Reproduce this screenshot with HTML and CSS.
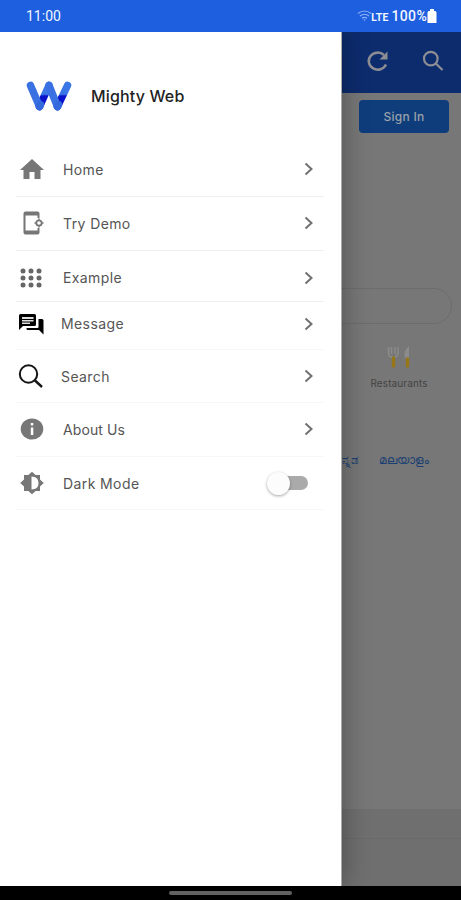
FILE: index.html
```
<!DOCTYPE html>
<html lang="en">
<head>
<meta charset="utf-8">
<title>Mighty Web</title>
<link rel="stylesheet" href="styles.css">
</head>
<body>
<div class="phone">
  <header class="status">
    <span class="time">11:00</span>
    <div class="signals">
      <svg class="wifi" width="15" height="12" viewBox="0 0 15 12" fill="none" stroke="#8fb0f5" stroke-width="1.2"><path d="M1 3.5Q7.500-1.500 14 3.500M3 6Q7.500 2.500 12 6M5 8.300Q7.500 6.500 10 8.300"/><path d="M6.300 9.500h2.400L7.500 11z" fill="#8fb0f5" stroke="none"/></svg>
      <span class="lte">LTE</span>
      <span class="percent">100%</span>
      <svg class="battery" width="10" height="14" viewBox="0 0 10 14" fill="#fff"><path d="M3 0h4v2h1.500l1 1.300V14H.5V3.300L1.500 2H3z"/></svg>
    </div>
  </header>

  <div class="screen">
    <main class="page">
      <div class="toolbar">
        <svg width="24" height="24" viewBox="0 0 24 24" fill="none" stroke="#8d8e94" stroke-width="2.500"><path d="M21 15.500A9 8.500 0 1 1 19 6"/><path d="M22.500 2.500v8h-8z" fill="#8d8e94" stroke="none"/></svg>
        <svg width="22" height="22" viewBox="0 0 22 22" fill="none" stroke="#8d8e94" stroke-width="2.200"><circle cx="8.800" cy="8.600" r="6.800"/><path d="M13.800 13.500 20.500 20"/></svg>
      </div>
      <button class="signin">Sign In</button>
      <div class="searchbox"></div>
      <div class="category">
        <svg width="24" height="24" viewBox="0 0 24 24" fill="none"><path d="M1.500 2v6q0 4 4.500 4.500Q11 12 11 8V2M4.500 2v7M8 2v7" stroke="#8b8b8b" stroke-width="1.500"/><path d="M22 1v12h-4q-2-7 4-12z" fill="#8b8b8b"/><path d="M6.500 13v8M20.500 14v7" stroke="#967617" stroke-width="3.400" stroke-linecap="round"/></svg>
        <span>Restaurants</span>
      </div>
      <div class="languages"><span>ಕನ್ನಡ</span><span>മലയാളം</span></div>
      <footer class="footer"><div class="footer-top"></div></footer>
    </main>

    <aside class="drawer">
      <div class="brand">
        <svg width="46" height="30" viewBox="0 0 46 30" fill="none" stroke-linecap="round" stroke-width="7.500">
          <defs>
            <linearGradient id="fold" gradientUnits="userSpaceOnUse" x1="0" y1="4" x2="0" y2="26"><stop offset=".42" stop-color="#3a76e6"/><stop offset=".5" stop-color="#0b12cc"/></linearGradient>
          </defs>
          <path d="M13.500 25.500 23 4.500M31.500 25.500 41.500 4.500" stroke="url(#fold)"/>
          <path d="M4.500 4.500 13.500 25.500M23 4.500 31.500 25.500" stroke="#3971e2"/>
          <path d="M13.500 25.500 14.500 23.500M31.500 25.500 32.500 23.500" stroke="#3468dd"/>
        </svg>
        <span>Mighty Web</span>
      </div>
      <nav class="menu">
        <a class="item home">
          <svg class="icon" width="26" height="24" viewBox="0 0 26 24" fill="#777"><path d="M13 2 1 13h3.500v9h6v-7h5v7h6v-9H25z"/></svg>
          <span>Home</span>
          <svg class="chevron" width="10" height="14" viewBox="0 0 10 14"><path d="m1.500 1.500 6 5.500-6 5.500"/></svg>
        </a>
        <a class="item demo">
          <svg class="icon" width="26" height="24" viewBox="0 0 26 24" fill="none" stroke="#777"><path d="M19.500 7V2.500q0-1-1-1h-12q-1 0-1 1v19q0 1 1 1h12q1 0 1-1V17" stroke-width="2"/><path d="M5 3h15M5 21h15" stroke-width="3"/><circle cx="20" cy="12" r="2.700" stroke-width="1.800"/><path d="M20 7.500v2M20 14.500v2M15.500 12h2M22.500 12h2" stroke-width="1.500"/></svg>
          <span>Try Demo</span>
          <svg class="chevron" width="10" height="14" viewBox="0 0 10 14"><path d="m1.500 1.500 6 5.500-6 5.500"/></svg>
        </a>
        <a class="item example">
          <svg class="icon" width="26" height="24" viewBox="0 0 26 24" fill="#666"><circle cx="4" cy="5" r="2.500"/><circle cx="12" cy="5" r="2.500"/><circle cx="20" cy="5" r="2.500"/><circle cx="4" cy="12" r="2.500"/><circle cx="12" cy="12" r="2.500"/><circle cx="20" cy="12" r="2.500"/><circle cx="4" cy="19" r="2.500"/><circle cx="12" cy="19" r="2.500"/><circle cx="20" cy="19" r="2.500"/></svg>
          <span>Example</span>
          <svg class="chevron" width="10" height="14" viewBox="0 0 10 14"><path d="m1.500 1.500 6 5.500-6 5.500"/></svg>
        </a>
        <a class="item message">
          <svg class="icon" width="26" height="24" viewBox="0 0 26 24" fill="#000"><path d="M2.500 2h14q1.500 0 1.500 1.500v9q0 1.500-1.500 1.500H5l-4 4V3.500Q1 2 2.500 2z"/><path d="M20.500 7H24q1.500 0 1.500 1.500v14L21 18H9.500q-1 0-1-1.500V16h11q1 0 1-1z"/><path d="M4 5h11.500v2H4zM4 8h11.500v1.500H4zM4 10.500h8V12H4z" fill="#ddd"/></svg>
          <span>Message</span>
          <svg class="chevron" width="10" height="14" viewBox="0 0 10 14"><path d="m1.500 1.500 6 5.500-6 5.500"/></svg>
        </a>
        <a class="item search">
          <svg class="icon" width="26" height="24" viewBox="0 0 26 24" fill="none" stroke="#151515" stroke-width="2"><circle cx="10.500" cy="10" r="8.700"/><path d="m16.500 16 7.500 7" stroke-width="2.400"/></svg>
          <span>Search</span>
          <svg class="chevron" width="10" height="14" viewBox="0 0 10 14"><path d="m1.500 1.500 6 5.500-6 5.500"/></svg>
        </a>
        <a class="item about">
          <svg class="icon" width="26" height="24" viewBox="0 0 26 24"><ellipse cx="13" cy="12" rx="11.300" ry="10.500" fill="#777"/><path d="M11.800 6h2.500v2.500h-2.500zM11.800 10.500h2.500V18h-2.500z" fill="#fff"/></svg>
          <span>About Us</span>
          <svg class="chevron" width="10" height="14" viewBox="0 0 10 14"><path d="m1.500 1.500 6 5.500-6 5.500"/></svg>
        </a>
        <div class="item dark">
          <svg class="icon" width="26" height="24" viewBox="0 0 26 24"><path d="m13 .8 3.600 3.200H21v4.600l3.800 3.400L21 15.400V20h-4.400L13 23.200 9.400 20H5v-4.600L1.200 12 5 8.600V4h4.400z" fill="#777"/><path d="M12.500 5.500q7 0 7 6.500t-7 6.500z" fill="#fff"/></svg>
          <span>Dark Mode</span>
          <div class="switch"><div class="thumb"></div></div>
        </div>
      </nav>
    </aside>
  </div>

  <div class="navbar"><div class="handle"></div></div>
</div>
</body>
</html>
```
FILE: styles.css
```
* { box-sizing: border-box; }
body { margin: 0; font-family: Inter, "Noto Sans", sans-serif; }
.phone { display: flex; flex-direction: column; width: 461px; height: 900px; overflow: hidden; }

.status { height: 32px; flex: none; display: flex; align-items: center; justify-content: space-between; padding: 0 24px 0 26px; background: #1d5fdf; color: #f2f6ff; }
.time { font: 14px Roboto, sans-serif; }
.signals { display: flex; align-items: center; }
.wifi { margin-right: -1px; }
.lte { font: 700 11px Lato, sans-serif; margin-right: 3px; }
.percent { font: 500 14px Roboto, sans-serif; letter-spacing: .3px; }

.screen { flex: 1; min-height: 0; display: grid; grid-template: 100% / 100%; }
.page, .drawer { grid-area: 1 / 1; }

.page { display: flex; flex-direction: column; background: #777; }
.toolbar { height: 61px; flex: none; display: flex; align-items: center; justify-content: flex-end; gap: 33px; padding: 0 17px 4px 0; background: #0d2c6e; }
.signin { align-self: flex-end; width: 90px; height: 33px; flex: none; margin: 7px 12px 0 0; padding: 0; border: 0; border-radius: 4px; background: #0f3d7c; color: #9aa0a8; font: 500 12px Inter, sans-serif; letter-spacing: .3px; }
.searchbox { height: 36px; flex: none; margin: 155px 9px 0 120px; border: 1px solid #6d6d6d; border-radius: 18px; }
.category { align-self: flex-end; width: 80px; margin: 21px 22px 0 0; display: flex; flex-direction: column; align-items: center; gap: 7px; font-size: 10px; line-height: 14px; letter-spacing: .1px; color: #444; }
.languages { display: flex; justify-content: flex-end; gap: 20px; margin: 61px 32px 0 0; font-size: 12px; line-height: 18px; color: #193f72; }
.footer { height: 77px; flex: none; margin-top: auto; background: #6f6f6f; }
.footer-top { height: 30px; border-bottom: 1px solid #6a6a6a; }

.drawer { width: 342px; z-index: 1; padding: 41px 17px 0 16px; background: #fff; border-right: 1px solid #aaa; box-shadow: 2px 0 24px rgba(0, 0, 0, .3); clip-path: inset(0 -40px 0 0); }
.brand { display: flex; align-items: center; gap: 19px; height: 46px; padding-left: 10px; font-size: 16px; font-weight: 500; letter-spacing: .15px; color: #222; }
.menu { display: flex; flex-direction: column; margin-top: 23px; }
.item { display: flex; align-items: center; height: 54px; padding-left: 3px; border-bottom: 1px solid #eee; font-size: 14px; letter-spacing: .4px; color: #555; }
.icon { margin-right: 18px; flex: none; }
.home { height: 55px; }
.demo { padding-bottom: 1px; }
.example { height: 51px; padding-top: 3px; }
.message { height: 48px; padding: 0 0 4px 2px; border-color: #f7f7f7; }
.search { height: 53px; padding-left: 2px; border-color: #f7f7f7; }
.message .icon, .search .icon { margin-right: 17px; }
.about { padding-bottom: 1px; border-color: #f7f7f7; letter-spacing: .1px; }
.dark { height: 53px; border-color: #f7f7f7; }
.chevron { margin: 0 10px 0 auto; fill: none; stroke: #707070; stroke-width: 2; }
.switch { width: 37px; height: 14px; margin: 0 16px 0 auto; display: flex; align-items: center; border-radius: 7px; background: #aaa; }
.thumb { width: 23px; height: 23px; flex: none; margin-left: -4px; border-radius: 50%; background: #fcfcfc; box-shadow: 0 1px 3px rgba(0, 0, 0, .35); }

.navbar { height: 14px; flex: none; display: flex; justify-content: center; padding-top: 5px; background: #000; }
.handle { width: 123px; height: 4px; border-radius: 2px; background: #626262; }
```
